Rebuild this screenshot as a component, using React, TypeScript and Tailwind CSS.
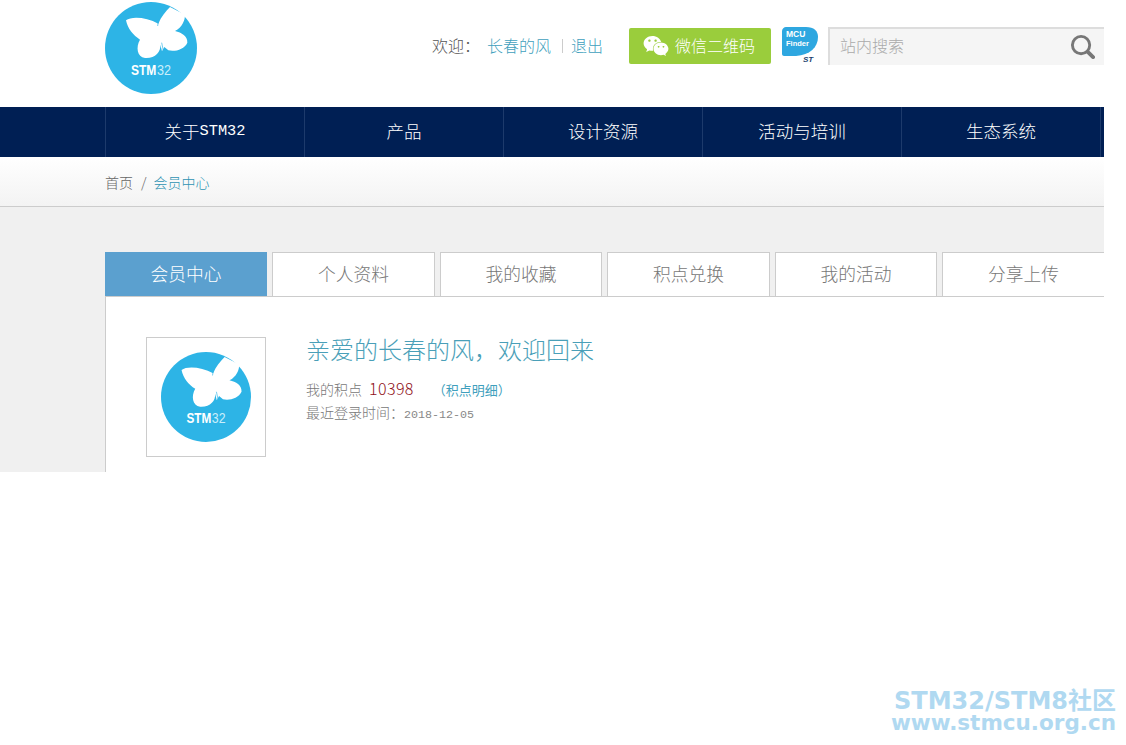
import React from "react";
import { FaWeixin } from "react-icons/fa";

const cjk = "font-['Noto_Sans_CJK_SC',sans-serif] font-light";

const tabs = ["会员中心", "个人资料", "我的收藏", "积点兑换", "我的活动", "分享上传"];

const Logo = ({ className }: { className: string }) => (
  <svg viewBox="0 0 276 276" className={className}>
    <circle cx="138" cy="138" r="138" fill="#2db4e6" />
    <path
      d="M63 55 C80 42 125 46 160 65 C168 45 182 28 195 15 L240 38 C240 55 232 75 210 87 C230 92 248 102 247 122 C238 142 210 150 190 145 L178 135 L171 148 L166 128 C168 150 150 170 120 168 C96 165 92 135 105 113 C85 100 68 80 63 55 Z"
      fill="#fff"
    />
    <path d="M160 58 L158 72 M170 122 L175 146" stroke="#2db4e6" strokeWidth="2" fill="none" />
    <text
      x="78"
      y="218"
      textLength="76"
      lengthAdjust="spacingAndGlyphs"
      fontFamily="'Liberation Sans', sans-serif"
      fontSize="44"
      fontWeight="700"
      fill="#fff"
    >
      STM
    </text>
    <text
      x="156"
      y="218"
      textLength="42"
      lengthAdjust="spacingAndGlyphs"
      fontFamily="'Liberation Sans', sans-serif"
      fontSize="44"
      fill="#c9eefb"
    >
      32
    </text>
  </svg>
);

const McuFinder = () => (
  <svg viewBox="0 0 36 36" className="w-[36px] h-[36px] ml-[11px] mb-[2px]">
    <path
      d="M4 0 H24 C32 0 36 4 36 10 C36 20 28 28 14 29 H2 C1 29 0 28 0 27 V4 C0 2 2 0 4 0 Z"
      fill="#2ea7e0"
    />
    <text x="4" y="10" fontFamily="'Liberation Sans', sans-serif" fontSize="8.5" fontWeight="700" fill="#fff">
      MCU
    </text>
    <text x="4" y="19" fontFamily="'Liberation Sans', sans-serif" fontSize="7.5" fontWeight="700" fill="#fff">
      Finder
    </text>
    <text x="21" y="35" fontFamily="'Liberation Sans', sans-serif" fontSize="8" fontWeight="700" fontStyle="italic" fill="#1c3f6e">
      ST
    </text>
  </svg>
);

const NavItem = ({ children }: { children: React.ReactNode }) => (
  <div className="w-[199px] border-l border-[#1d3a6b] flex items-center justify-center text-white text-[17.5px] pb-[2px]">
    {children}
  </div>
);

const App = () => {
  return (
    <div className={`relative w-[1126px] h-[745px] bg-white overflow-hidden ${cjk}`}>
      <div className="w-[1104px]">
        {/* Header */}
        <header className="h-[107px] pl-[105px] flex items-start bg-white">
          <Logo className="w-[92px] h-[92px] mt-[2px]" />
          <div className="ml-auto mt-[27px] flex items-center h-[38px]">
            <span className="text-[16px] text-[#555] mb-[2px]">欢迎：</span>
            <a className="ml-[7px] text-[16px] text-[#3f9fbd] mb-[2px]">长春的风</a>
            <span className="ml-[11px] mr-[8px] w-px h-[14px] bg-[#ccc]" />
            <a className="text-[16px] text-[#3f9fbd] mb-[2px]">退出</a>
            <div className="ml-[26px] w-[142px] h-[36px] bg-[#9acd3c] rounded-[2px] flex items-center pl-[14px] gap-[6px] text-white text-[16px]">
              <FaWeixin className="w-[26px] h-[26px]" />
              <span className="mb-[2px]">微信二维码</span>
            </div>
            <McuFinder />
            <div className="ml-[10px] w-[276px] h-[38px] bg-[#f5f5f5] border-t-2 border-l-2 border-[#dddddd] flex items-center pl-[10px] pr-[9px]">
              <span className="text-[16px] text-[#aaa] mb-[4px]">站内搜索</span>
              <svg viewBox="0 0 26 26" className="ml-auto w-[25px] h-[25px] mb-[2px]" fill="none" stroke="#777">
                <circle cx="11.5" cy="11.5" r="9" strokeWidth="3" />
                <path d="M18.5 18.5 L24 24" strokeWidth="4" strokeLinecap="round" />
              </svg>
            </div>
          </div>
        </header>

        {/* Nav */}
        <nav className="h-[50px] bg-[#001f54] pl-[105px] flex">
          <NavItem>
            关于<span className="font-['Liberation_Mono',monospace] font-normal text-[15.3px]">STM32</span>
          </NavItem>
          <NavItem>产品</NavItem>
          <NavItem>设计资源</NavItem>
          <NavItem>活动与培训</NavItem>
          <NavItem>生态系统</NavItem>
          <div className="border-l border-[#1d3a6b]" />
        </nav>

        {/* Breadcrumb */}
        <div className="h-[50px] bg-gradient-to-b from-white to-[#f3f3f3] border-b border-[#cccccc] pl-[105px] pt-[2px] flex items-center text-[14px]">
          <span className="text-[#666]">首页</span>
          <span className="ml-[8px] mr-[7px] text-[#666]">/</span>
          <a className="text-[#2f93b3]">会员中心</a>
        </div>

        {/* Body */}
        <main className="h-[265px] bg-[#f0f0f0] pl-[105px] pt-[45px] flex flex-col">
          <div className="h-[45px] grid grid-cols-[162px_163px_162px_163px_162px_162px] gap-[5px] border-b border-[#cccccc] overflow-hidden">
            {tabs.map((tab, i) => (
              <div
                key={tab}
                className={
                  i === 0
                    ? "bg-[#5ba0cf] text-white text-[17.75px] pb-[2px] flex items-center justify-center"
                    : i === 5
                      ? "bg-white border-t border-l border-[#cccccc] text-[#777] text-[17.75px] pb-[2px] flex items-center justify-center"
                      : "bg-white border-t border-x border-[#cccccc] text-[#777] text-[17.75px] pb-[2px] flex items-center justify-center"
                }
              >
                {tab}
              </div>
            ))}
          </div>
          <div className="flex-1 bg-white border-l border-[#cccccc] pl-[40px] pt-[40px] flex gap-[40px] overflow-hidden">
            <div className="w-[120px] h-[120px] shrink-0 border border-[#cccccc] flex items-center justify-center">
              <Logo className="w-[90px] h-[90px]" />
            </div>
            <div>
              <h2 className="text-[24px] leading-[28px] font-light text-[#4a9fb8] -mt-[2px]">
                亲爱的长春的风，欢迎回来
              </h2>
              <p className="mt-[13px] text-[14px] leading-[24px] text-[#777] flex items-baseline">
                我的积点
                <span className="ml-[7px] text-[#8f1020] text-[16px] tracking-[0.4px]">10398</span>
                <a className="ml-[19px] text-[13px] text-[#3f9fbd] font-normal">（积点明细）</a>
              </p>
              <p className="text-[14px] leading-[21px] text-[#777] flex items-baseline">
                最近登录时间：
                <span className="font-['Liberation_Mono',monospace] text-[#888] text-[11.67px]">2018-12-05</span>
              </p>
            </div>
          </div>
        </main>
      </div>

      {/* Watermark */}
      <div className="absolute right-[10px] bottom-[12px] text-right font-['DejaVu_Sans','Noto_Sans_CJK_SC',sans-serif] font-bold text-[#b0d9f1] leading-none">
        <div className="text-[24px] leading-[22px]">STM32/STM8社区</div>
        <div className="text-[21.5px] leading-[21px]">www.stmcu.org.cn</div>
      </div>
    </div>
  );
};

export default App;
